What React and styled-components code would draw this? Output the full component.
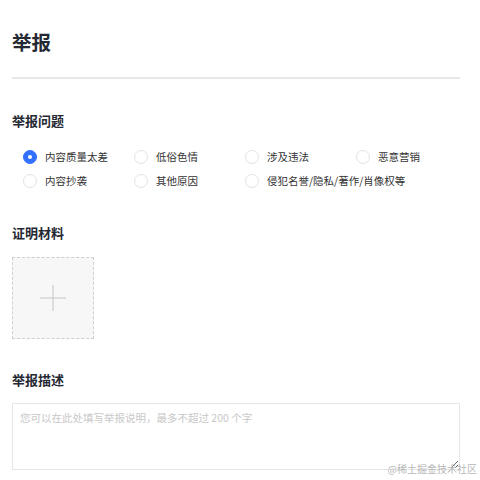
import React, {useState} from "react";
import styled, {createGlobalStyle} from 'styled-components';

const GlobalStyle = createGlobalStyle`
    html, body { margin: 0; padding: 0; background: #fff; }
    body { font-family: "Noto Sans CJK SC", "Noto Sans", sans-serif; color: #252933; }
    * { box-sizing: border-box; }
`;

const Page = styled.div`
    position: relative;
    width: 480px;
    height: 480px;
    padding: 28px 20px 0 12px;
    overflow: hidden;
`;

const Title = styled.h1`
    margin: 0;
    font-size: 19.5px;
    line-height: 28px;
    font-weight: 700;
    color: #252933;
`;

const Divider = styled.div`
    margin-top: 21px;
    height: 1.5px;
    background: #e8e8e8;
`;

const Section = styled.section`
    margin-top: ${p => p.$top}px;
`;

const SectionTitle = styled.h2`
    margin: 0;
    font-size: 13px;
    line-height: 20px;
    font-weight: 700;
    color: #252933;
`;

const RadioGrid = styled.div`
    margin-top: 14px;
    padding-left: 11px;
    display: grid;
    grid-template-columns: 111px 111px 111px 111px;
    grid-auto-rows: 24px;
`;

const RadioItem = styled.label`
    display: flex;
    align-items: center;
    cursor: pointer;
    white-space: nowrap;
`;

const RadioDot = styled.span`
    width: 14px;
    height: 14px;
    border-radius: 50%;
    flex-shrink: 0;
    border: 1px solid ${p => p.$checked ? '#3370ff' : '#e3e3e3'};
    background: ${p => p.$checked ? '#3370ff' : '#fff'};
    display: flex;
    align-items: center;
    justify-content: center;

    &::after {
        content: '';
        width: 4px;
        height: 4px;
        border-radius: 50%;
        background: #fff;
        display: ${p => p.$checked ? 'block' : 'none'};
    }
`;

const RadioLabel = styled.span`
    margin-left: 8px;
    font-size: 10.5px;
    line-height: 16px;
    color: #333;
`;

const UploadBox = styled.div`
    margin-top: 14px;
    width: 82px;
    height: 82px;
    border: 1px dashed #cfcfcf;
    background: #f7f7f7;
    display: flex;
    align-items: center;
    justify-content: center;
    cursor: pointer;
`;

const DescInput = styled.textarea`
    display: block;
    margin-top: 13px;
    width: 448px;
    height: 67px;
    padding: 6px 7px;
    border: 1px solid #e6e6e6;
    border-radius: 0;
    outline: 0;
    font-family: "Noto Sans CJK SC", "Noto Sans", sans-serif;
    font-size: 10.5px;
    line-height: 16px;
    color: #333;
    resize: both;

    &::placeholder { color: #c8c8c8; }
`;

const Watermark = styled.div`
    position: absolute;
    right: 3px;
    bottom: 4px;
    font-family: "Noto Sans CJK SC", sans-serif;
    font-size: 10px;
    line-height: 14px;
    color: #b8b8b8;
    pointer-events: none;
`;

const reasons = [
    '内容质量太差', '低俗色情', '涉及违法', '恶意营销',
    '内容抄袭', '其他原因', '侵犯名誉/隐私/著作/肖像权等',
];

const App = () => {
    const [picked, setPicked] = useState(0);

    return (
        <>
            <GlobalStyle/>
            <Page>
                <Title>举报</Title>
                <Divider/>

                <Section $top={32}>
                    <SectionTitle>举报问题</SectionTitle>
                    <RadioGrid>
                        {reasons.map((r, i) => (
                            <RadioItem key={r} onClick={() => setPicked(i)}>
                                <RadioDot $checked={picked === i}/>
                                <RadioLabel>{r}</RadioLabel>
                            </RadioItem>
                        ))}
                    </RadioGrid>
                </Section>

                <Section $top={30}>
                    <SectionTitle>证明材料</SectionTitle>
                    <UploadBox>
                        <svg width="26" height="26" viewBox="0 0 26 26">
                            <path d="M13 0v26M0 13h26" stroke="#c4c4c4" strokeWidth="1"/>
                        </svg>
                    </UploadBox>
                </Section>

                <Section $top={31}>
                    <SectionTitle>举报描述</SectionTitle>
                    <DescInput placeholder="您可以在此处填写举报说明，最多不超过 200 个字"/>
                </Section>

                <Watermark>@稀土掘金技术社区</Watermark>
            </Page>
        </>
    );
};

export default App;
